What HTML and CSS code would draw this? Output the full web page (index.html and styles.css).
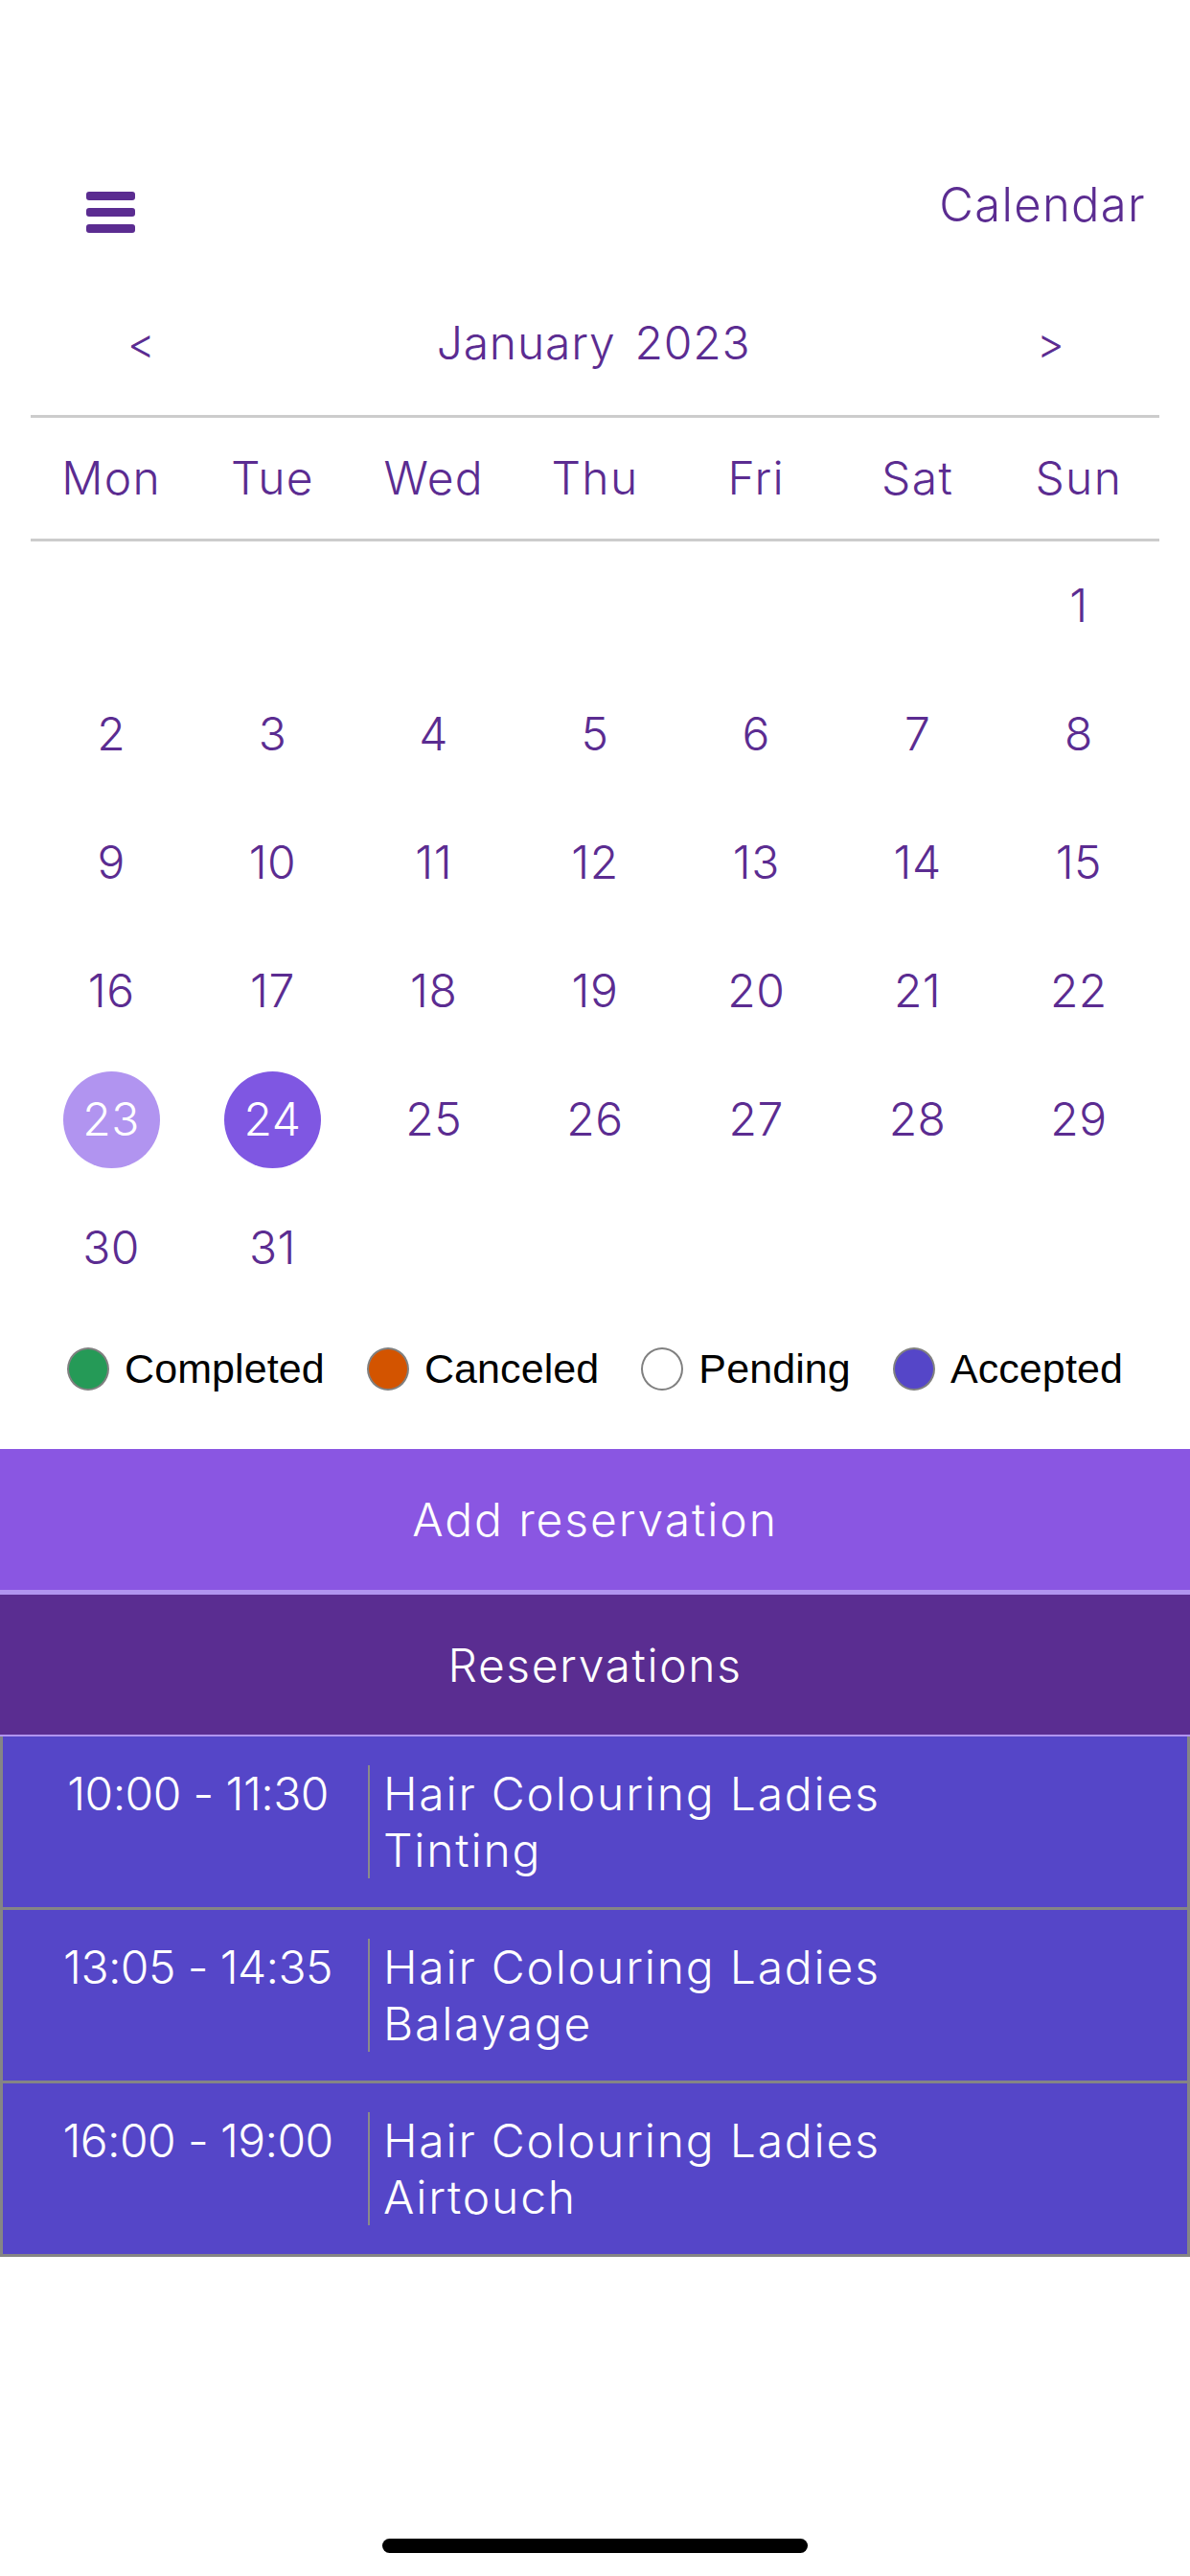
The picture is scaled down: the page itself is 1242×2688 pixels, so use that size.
FILE: index.html
```html
<!DOCTYPE html>
<html lang="en">
<head>
<meta charset="utf-8">
<title>Calendar</title>
<link rel="stylesheet" href="styles.css">
</head>
<body>
<div class="screen">
  <header class="topbar">
    <div class="menu" aria-label="Menu"><span></span><span></span><span></span></div>
    <div class="title">Calendar</div>
  </header>

  <div class="monthnav">
    <span class="arrow">&lt;</span>
    <div class="month"><span>January</span><span>2023</span></div>
    <span class="arrow">&gt;</span>
  </div>

  <div class="weekdays">
    <span>Mon</span><span>Tue</span><span>Wed</span><span>Thu</span><span>Fri</span><span>Sat</span><span>Sun</span>
  </div>

  <div class="days">
    <span></span><span></span><span></span><span></span><span></span><span></span><span class="day">1</span>
    <span class="day">2</span><span class="day">3</span><span class="day">4</span><span class="day">5</span><span class="day">6</span><span class="day">7</span><span class="day">8</span>
    <span class="day">9</span><span class="day">10</span><span class="day">11</span><span class="day">12</span><span class="day">13</span><span class="day">14</span><span class="day">15</span>
    <span class="day">16</span><span class="day">17</span><span class="day">18</span><span class="day">19</span><span class="day">20</span><span class="day">21</span><span class="day">22</span>
    <span class="day"><b class="circle circle-light">23</b></span><span class="day"><b class="circle circle-dark">24</b></span><span class="day">25</span><span class="day">26</span><span class="day">27</span><span class="day">28</span><span class="day">29</span>
    <span class="day">30</span><span class="day">31</span>
  </div>

  <div class="legend">
    <div class="legend-item"><i class="dot dot-completed"></i><span>Completed</span></div>
    <div class="legend-item"><i class="dot dot-canceled"></i><span>Canceled</span></div>
    <div class="legend-item"><i class="dot dot-pending"></i><span>Pending</span></div>
    <div class="legend-item"><i class="dot dot-accepted"></i><span>Accepted</span></div>
  </div>

  <div class="add">Add reservation</div>
  <div class="res-head">Reservations</div>

  <div class="res-list">
    <div class="res-row">
      <div class="res-time">10:00 - 11:30</div>
      <div class="res-name">Hair Colouring Ladies<br>Tinting</div>
    </div>
    <div class="res-row">
      <div class="res-time">13:05 - 14:35</div>
      <div class="res-name">Hair Colouring Ladies<br>Balayage</div>
    </div>
    <div class="res-row">
      <div class="res-time">16:00 - 19:00</div>
      <div class="res-name">Hair Colouring Ladies<br>Airtouch</div>
    </div>
  </div>

  <div class="home-indicator"></div>
</div>
</body>
</html>
```

FILE: styles.css
```css
* { box-sizing: border-box; }

html, body {
  margin: 0;
  padding: 0;
  background: #ffffff;
}

.screen {
  width: 1242px;
  min-height: 2688px;
  display: flex;
  flex-direction: column;
  font-family: Inter, "Noto Sans", sans-serif;
  font-weight: 300;
  color: #5b2c91;
}

/* Top bar */
.topbar {
  display: flex;
  justify-content: space-between;
  align-items: flex-start;
  padding: 192px 46px 0 90px;
  height: 243px;
}

.menu {
  margin-top: 8px;
  width: 51px;
  display: flex;
  flex-direction: column;
  gap: 8px;
}

.menu span {
  display: block;
  height: 9px;
  border-radius: 3px;
  background: #5b2c91;
}

.title {
  font-size: 49px;
  line-height: 50px;
  margin-top: -3px;
  letter-spacing: 1.3px;
}

/* Month navigation */
.monthnav {
  margin-top: 42px;
  height: 146px;
  display: flex;
  align-items: center;
  justify-content: space-between;
  padding: 0 136px 0 133px;
  font-size: 48px;
  line-height: 60px;
}

.arrow {
  width: 24px;
  text-align: center;
  font-size: 44px;
}

.month {
  display: flex;
  gap: 20px;
  letter-spacing: 0.8px;
}

/* Weekdays */
.weekdays {
  margin: 2px 32px 0;
  height: 132px;
  border-top: 3px solid #cccccc;
  border-bottom: 3px solid #cccccc;
  display: grid;
  grid-template-columns: repeat(7, 1fr);
  align-items: center;
  text-align: center;
  font-size: 48px;
  line-height: 60px;
  letter-spacing: 1.3px;
}

/* Day grid */
.days {
  margin: 0 32px;
  display: grid;
  grid-template-columns: repeat(7, 1fr);
  grid-auto-rows: 134px;
  font-size: 48px;
  letter-spacing: 0.5px;
}

.day {
  display: flex;
  align-items: center;
  justify-content: center;
  line-height: 60px;
}

.circle {
  width: 101px;
  height: 101px;
  border-radius: 50%;
  display: flex;
  align-items: center;
  justify-content: center;
  color: #ffffff;
  font-weight: 300;
}

.circle-light { background: #b194f0; }
.circle-dark { background: #7f57e2; }

/* Legend */
.legend {
  margin-top: 37px;
  height: 45px;
  display: flex;
  justify-content: center;
  gap: 44px;
  font-family: "Liberation Sans", Arial, sans-serif;
  font-weight: 400;
  font-size: 43px;
  line-height: 45px;
  letter-spacing: 0.1px;
  color: #000000;
}

.legend-item {
  display: flex;
  align-items: center;
  gap: 16px;
}

.dot {
  display: block;
  width: 44px;
  height: 45px;
  border-radius: 50%;
  border: 2px solid #808080;
}

.dot-completed { background: #259a57; }
.dot-canceled { background: #d35400; }
.dot-pending { background: #ffffff; }
.dot-accepted { background: #5546c8; }

/* Add reservation + header */
.add {
  margin-top: 61px;
  height: 147px;
  background: #8a56e2;
  color: #ffffff;
  display: flex;
  align-items: center;
  justify-content: center;
  font-size: 48px;
  letter-spacing: 1.9px;
}

.res-head {
  height: 153px;
  border-top: 5px solid #b194f0;
  border-bottom: 2px solid #b194f0;
  background: #5a2d91;
  color: #ffffff;
  display: flex;
  align-items: center;
  justify-content: center;
  font-size: 48px;
  letter-spacing: 1.6px;
}

/* Reservation rows */
.res-list {
  border-left: 3px solid #858585;
  border-right: 3px solid #858585;
  background: #5546c8;
  color: #ffffff;
  font-size: 48px;
}

.res-row {
  display: flex;
  padding: 30px 0;
  height: 181px;
  border-bottom: 3px solid #858585;
}

.res-time {
  width: 381px;
  padding-left: 26px;
  text-align: center;
  line-height: 59px;
  letter-spacing: -0.6px;
}

.res-name {
  border-left: 2px solid #8a8a8a;
  padding-left: 14px;
  line-height: 59px;
  letter-spacing: 1.8px;
}

/* Home indicator */
.home-indicator {
  margin: auto auto 24px;
  width: 444px;
  height: 15px;
  border-radius: 8px;
  background: #000000;
}
```
